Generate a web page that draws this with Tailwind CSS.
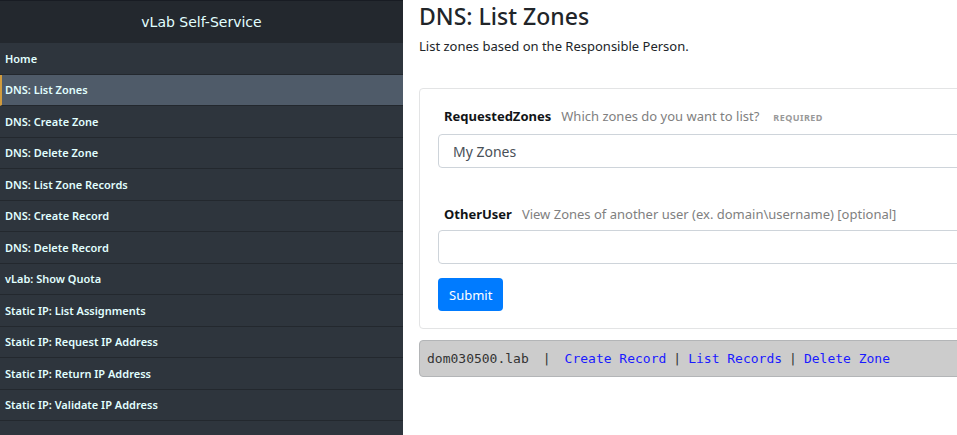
<!DOCTYPE html>
<html lang="en">
<head>
<meta charset="utf-8">
<meta name="viewport" content="width=device-width, initial-scale=1">
<title>vLab Self-Service</title>
<script src="https://cdn.jsdelivr.net/npm/@tailwindcss/browser@4"></script>
</head>
<body class="flex min-h-screen overflow-x-hidden bg-white font-['Noto_Sans',sans-serif] text-[13px] leading-6 text-[#212529]">
  <aside class="w-[403px] shrink-0 border-t border-[#181c23] bg-[#2e353d] text-[#e1ffff]">
    <div class="flex h-[42px] items-center justify-center bg-[#23282e] font-['DejaVu_Sans',sans-serif] text-[14px]">vLab Self-Service</div>
    <nav class="grid h-[378px] grid-rows-12 text-[11px] font-semibold leading-4">
      <a href="#" class="flex items-center border-b border-[#23282e] pt-px pl-[5px]">Home</a>
      <a href="#" aria-current="page" class="flex items-center border-b border-[#23282e] border-l-2 border-l-[#d19b3d] bg-[#4f5b69] pt-px pl-[3px]">DNS: List Zones</a>
      <a href="#" class="flex items-center border-b border-[#23282e] pt-px pl-[5px]">DNS: Create Zone</a>
      <a href="#" class="flex items-center border-b border-[#23282e] pt-px pl-[5px]">DNS: Delete Zone</a>
      <a href="#" class="flex items-center border-b border-[#23282e] pt-px pl-[5px]">DNS: List Zone Records</a>
      <a href="#" class="flex items-center border-b border-[#23282e] pt-px pl-[5px]">DNS: Create Record</a>
      <a href="#" class="flex items-center border-b border-[#23282e] pt-px pl-[5px]">DNS: Delete Record</a>
      <a href="#" class="flex items-center border-b border-[#23282e] pt-px pl-[5px]">vLab: Show Quota</a>
      <a href="#" class="flex items-center border-b border-[#23282e] pt-px pl-[5px]">Static IP: List Assignments</a>
      <a href="#" class="flex items-center border-b border-[#23282e] pt-px pl-[5px]">Static IP: Request IP Address</a>
      <a href="#" class="flex items-center border-b border-[#23282e] pt-px pl-[5px]">Static IP: Return IP Address</a>
      <a href="#" class="flex items-center border-b border-[#23282e] pt-px pl-[5px]">Static IP: Validate IP Address</a>
    </nav>
  </aside>
  <main class="min-w-0 flex-1 overflow-hidden pl-4">
    <div class="-mr-12">
      <h1 class="text-[23px] leading-8 font-medium">DNS: List Zones</h1>
      <p class="mt-[2px]">List zones based on the Responsible Person.</p>
      <form class="mt-[30px] rounded border border-[#e3e4e5] px-[18px] pt-[15px] pb-[17px]">
        <label for="zones" class="flex items-baseline px-[6px] text-[#808080]"><span class="font-bold text-[#111417]">RequestedZones</span><span class="ml-[10px]">Which zones do you want to list?</span><span class="ml-[14px] text-[9px] font-bold tracking-wider text-[#999]">REQUIRED</span></label>
        <select id="zones" class="mt-1 block h-[34px] w-full rounded border border-[#ced4da] bg-white px-[10px] text-[14px] leading-5 text-[#495057]"><option>My Zones</option></select>
        <label for="other" class="mt-[34px] flex items-baseline px-[6px] text-[#808080]"><span class="font-bold text-[#111417]">OtherUser</span><span class="ml-[10px]">View Zones of another user (ex. domain\username) [optional]</span></label>
        <input id="other" type="text" class="mt-1 block h-[34px] w-full rounded border border-[#ced4da] bg-white px-[14px]">
        <button type="submit" class="mt-[14px] block h-[33px] rounded bg-[#007bff] px-[11px] text-[13px] text-white">Submit</button>
      </form>
      <div class="mt-[11px] flex h-[37px] items-center rounded border border-[#b3b5b7] bg-[#ccc] px-[7px] font-['DejaVu_Sans_Mono',monospace] text-[13px] whitespace-pre text-[#333]"><span>dom030500.lab</span><span class="px-[14px]">|</span><a href="#" class="text-[#1a1aff]">Create Record</a><span class="px-[7px]">|</span><a href="#" class="text-[#1a1aff]">List Records</a><span class="px-[7px]">|</span><a href="#" class="text-[#1a1aff]">Delete Zone</a></div>
    </div>
  </main>
</body>
</html>
